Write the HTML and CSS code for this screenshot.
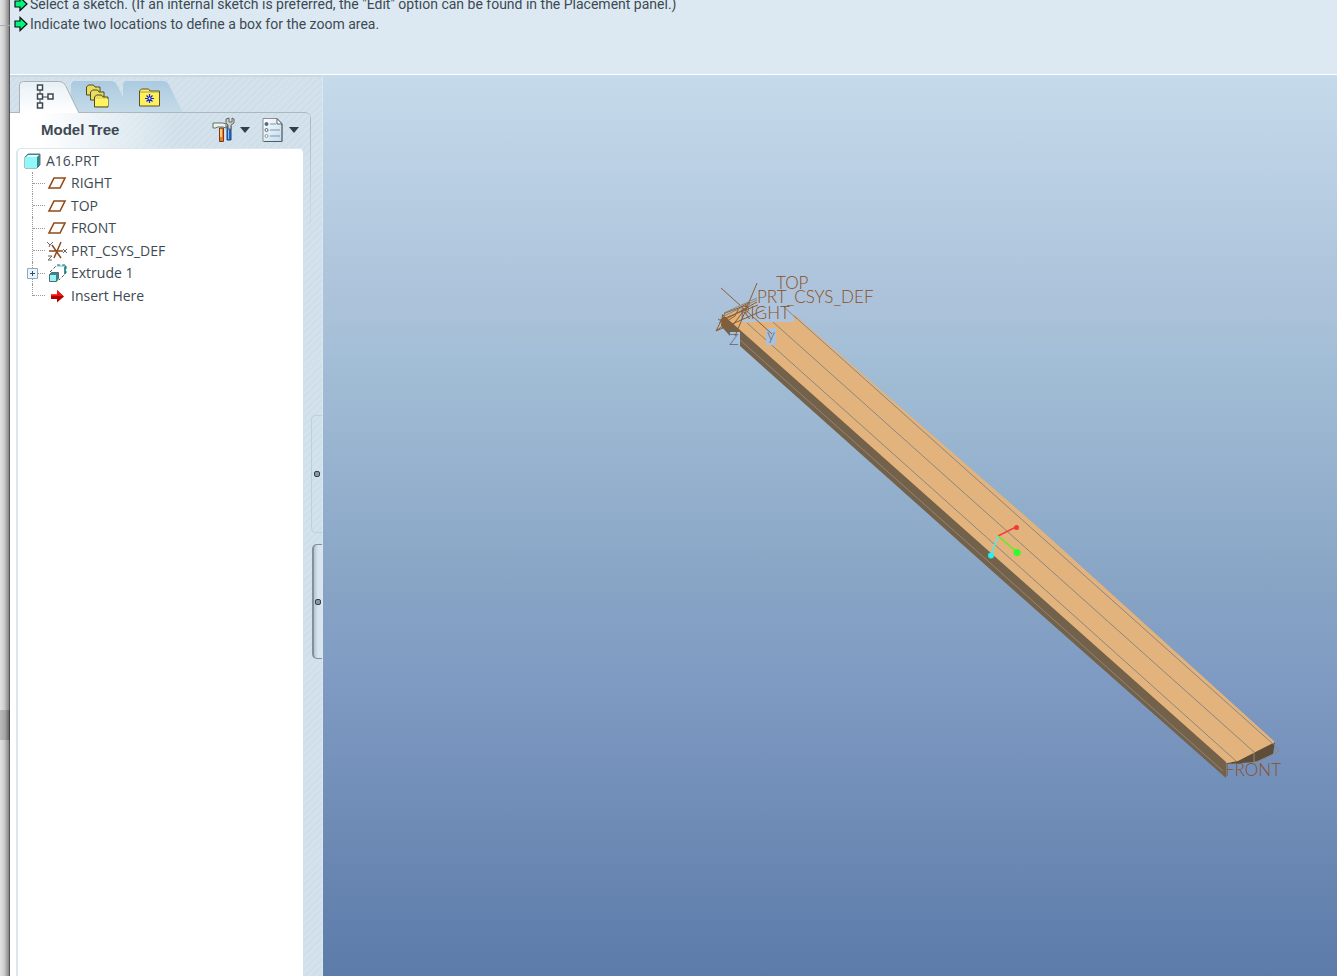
FILE: index.html
```html
<!DOCTYPE html>
<html lang="en">
<head>
<meta charset="utf-8">
<title>A16.PRT</title>
<link rel="stylesheet" href="styles.css">
</head>
<body>
<div class="app">
  <div class="edge"><div class="edge-top"></div><div class="edge-thumb"></div></div>
  <div class="window">
    <section class="messages" aria-label="Messages">
      <p class="message"><svg class="arrow" viewBox="0 0 14 16"><path d="M1 5h5V1.500l7 6.500-7 6.500V11H1z"/></svg>Select a sketch. (If an internal sketch is preferred, the "Edit" option can be found in the Placement panel.)</p>
      <p class="message"><svg class="arrow" viewBox="0 0 14 16"><path d="M1 5h5V1.500l7 6.500-7 6.500V11H1z"/></svg>Indicate two locations to define a box for the zoom area.</p>
    </section>
    <main class="work">
      <aside class="navigator">
        <div class="tabs" role="tablist">
          <button class="tab" role="tab" aria-selected="true" aria-label="Model Tree">
            <svg viewBox="0 0 62 32">
              <defs><linearGradient id="tabOn" x2="0" y2="1"><stop offset="0" stop-color="#e8f0f5"/><stop offset="1" stop-color="#fff"/></linearGradient></defs>
              <path d="M.5 32V4q0-3.500 4-3.500h36q4 0 6 4L60 32" fill="url(#tabOn)" stroke="#a9b1b6"/>
              <g fill="#fff" stroke="#3b4850" stroke-width="1.500"><path d="M21 9v4m0 6v3m3-6h5" fill="none" stroke-width="1"/><path d="M18.500 4h5v5h-5zM18.500 13h5v5h-5zM18.500 22h5v5h-5zM29 13h5v5h-5z"/></g>
            </svg>
          </button>
          <button class="tab" role="tab" aria-selected="false" aria-label="Folder Browser">
            <svg viewBox="0 0 62 32">
              <defs><linearGradient id="tabOff" x2="0" y2="1"><stop offset="0" stop-color="#abcae0"/><stop offset="1" stop-color="#c6dbe8"/></linearGradient></defs>
              <path d="M0 32V5q0-5 4-5h36q4 0 6 4l14 28z" fill="url(#tabOff)"/>
              <g stroke="#514a20" fill="#e8dc62"><path d="M15.500 14V6l2-2h5l1.500 2h5v8z"/><path d="M19.500 19v-8l2-2h5l1.500 2h5v8z"/><path d="M23.500 26V16l2-2h5l1.500 2h5v10z"/></g>
              <path d="M24 18h13v7H24z" fill="#fff45b"/>
            </svg>
          </button>
          <button class="tab" role="tab" aria-selected="false" aria-label="Favorites">
            <svg viewBox="0 0 62 32">
              <path d="M0 32V5q0-5 4-5h36q4 0 6 4l14 28z" fill="url(#tabOff)"/>
              <path d="M16.500 25V10l2-2h7l1.500 2h9.500v15z" fill="#fff15b" stroke="#5b552c"/><path d="M17 11h19" stroke="#a99d42"/>
              <path d="M26.500 13v9m-4.500-4.500h9m-7.500-3 6 6m0-6-6 6" stroke="#1728d0" stroke-width="1.200"/><circle cx="26.500" cy="17.500" r="1" fill="#fff"/>
            </svg>
          </button>
        </div>
        <div class="nav-body">
          <div class="panel">
            <header class="panel-head">
              <h1 class="panel-title">Model Tree</h1>
              <div class="tools">
                <button class="tool" aria-label="Settings">
                  <svg class="tool-icon" viewBox="0 0 24 26">
                    <path d="M16 9h4v14h-4V10z" fill="#2467ce" stroke="#24457b"/><path d="M17.500 11v11" stroke="#80bbf4"/>
                    <path d="M15 2v4l2 2v4h3V8l3-2V2l-2-1v4h-3V1z" fill="#ccd0ca" stroke="#62665f"/>
                    <path d="M8.500 11h4v13.500h-4z" fill="#ed7b22" stroke="#7a3a18"/><path d="M10 12v8" stroke="#ffe49c" stroke-width="1.500"/>
                    <path d="M2 6h10l3 1v4l-3-1H6l-1 1H2z" fill="#eef2ee" stroke="#637068"/>
                  </svg><span class="caret"></span>
                </button>
                <button class="tool" aria-label="Show">
                  <svg class="tool-icon" viewBox="0 0 24 26">
                    <defs><linearGradient id="sheet" x2="1" y2="1"><stop stop-color="#fff"/><stop offset="1" stop-color="#bddcf4"/></linearGradient></defs>
                    <path d="M3 1.500h14l5 5V24.500H3z" fill="url(#sheet)" stroke="#8a8f92"/><path d="M22 7v17.500H4" fill="none" stroke="#555c60"/><path d="M17 1.500V7h5z" fill="#fff" stroke="#626668"/>
                    <path d="M10 7h6m-6 6h10m-10 6h10" stroke="#8c9295"/><g stroke="#526576" fill="#fff"><circle cx="6.500" cy="7" r="1.500" fill="#51667b"/><circle cx="6.500" cy="13" r="1.500"/><circle cx="6.500" cy="19" r="1.500" stroke="#9b9489"/></g>
                  </svg><span class="caret"></span>
                </button>
              </div>
            </header>
            <div class="tree-box">
              <ul class="tree">
                <li class="root"><svg class="root-icon" viewBox="0 0 18 16"><path d="M1 4l3-3h12v11l-3 3H1z" fill="#37868c" stroke="#64777b"/><path d="M1 4h12v11H1z" fill="#91f8fa"/><path d="M2 4l2-2h11l-2 2z" fill="#e0ffff"/></svg>A16.PRT</li>
                <li class="node"><svg class="icon" viewBox="0 0 22 22"><path class="plane" d="M8 6h11l-5 10H3z"/></svg>RIGHT</li>
                <li class="node"><svg class="icon" viewBox="0 0 22 22"><path class="plane" d="M8 6h11l-5 10H3z"/></svg>TOP</li>
                <li class="node"><svg class="icon" viewBox="0 0 22 22"><path class="plane" d="M8 6h11l-5 10H3z"/></svg>FRONT</li>
                <li class="node"><svg class="icon" viewBox="0 0 22 22"><g fill="none" stroke="#8c4b1c" stroke-width="1.500"><path d="M3 11h14M6 5l9 13M15 2 8 18"/></g><g fill="none" stroke="#666"><path d="M1 2l3 3 3-3M4 5 3 7M17 9l4 4m0-4-4 4M2 16h4l-4 4h4"/></g></svg>PRT_CSYS_DEF</li>
                <li class="node"><button class="expand" aria-label="Expand Extrude 1"><svg viewBox="0 0 11 11"><path d="M.5.5h10v10H.5z" fill="#eaf4fc" stroke="#8eaabd"/><path d="M3 5.500h5M5.500 3v5" stroke="#2c526e"/></svg></button><svg class="icon" viewBox="0 0 22 22"><path d="M12 3h8l-2 2h-8z" fill="#8df0f2"/><path d="M18 5l2-2v8l-2 2z" fill="#2c9b9e"/><path d="M4 10l7-7h9v8l-7 7" fill="none" stroke="#4a5052" stroke-dasharray="3 2"/><path d="M3.500 12.500l2-2h7v6l-2 3h-7z" fill="#37868c" stroke="#596b6c"/><path d="M4 13h6v6H4z" fill="#91f4f6"/></svg>Extrude 1</li>
                <li class="node last"><svg class="icon" viewBox="0 0 22 22"><path d="M5 9.500h6V5l7 6.500-7 6V14H5z" fill="#b40000"/><path d="M5 9.500h6V5l6 6H5z" fill="#f51414"/></svg>Insert Here</li>
              </ul>
            </div>
          </div>
          <div class="splitter"><button class="grip grip-flat" aria-label="Collapse navigator"></button><button class="grip grip-raised" aria-label="Resize navigator"></button></div>
        </div>
      </aside>
      <section class="viewport" aria-label="Model view">
        <svg class="scene" viewBox="323 75 1014 901">
          <path d="M1228 764 1275 742 1273 754 1255 762z" fill="#5e4d38"/>
          <path d="M722 316 773 296 1040 529 1275 742 1238 761 1226 763 1010 570z" fill="#e3b37d"/>
          <path d="M722 314 1010 570 1226 762V778L991 570 740 346V338L730 336 721 326z" fill="#73614a"/>
          <path d="M1273 743 1279 751 1258 762H1254V753" fill="none" stroke="#8a8782"/>
          <g fill="none" stroke="#8b867e">
            <path d="M747 323 1022 569 1236 761M773 322 1254 752M783 306 1273 744M740 340 998 570 1223 771"/>
          </g>
          <path d="M740 304h54v18H740z" fill="#adc4dc"/>
          <g fill="#a9c1db"><path d="M730 332h10v13h-10zM766 328h10v17h-10z"/></g>
          <path d="M783 306 797 319" stroke="#8b867e"/>
          <g class="datum">
            <text x="740" y="319">RIGHT</text>
            <path d="M757 291h37v14H757z" fill="#adc4dc"/>
            <text x="776" y="289">TOP</text>
            <text x="757" y="303">PRT_CSYS_DEF</text>
            <text x="1225" y="776">FRONT</text>
            <text class="axis" x="729" y="345">Z</text>
            <text class="axis" x="767" y="340">y</text>
          </g>
          <g fill="none" stroke="#8f5c2c">
            <path d="M721 288 772 334M757 283 735 336M716 331 764 310M719 323 757 302M720 320 758 305M716 331 725 313 750 304M721 325 735 316 739 308 750 302 733 325zM718 319l8 5-9 6"/>
          </g>
          <path d="M724 313 757 298M722 317 757 300" fill="none" stroke="#8e8778"/>
          <g stroke-width="1.500"><path d="M998 536 1016 527" stroke="#f04040"/><path d="M998 536 1017 552" stroke="#5fed22"/><path d="M998 536 991 555" stroke="#58e9e4"/></g>
          <circle cx="1016.500" cy="527.500" r="2.500" fill="#f03c36"/><circle cx="1017" cy="552.500" r="3.500" fill="#2cff27"/><circle cx="991" cy="555.500" r="3" fill="#24eff2"/>
        </svg>
      </section>
    </main>
  </div>
</div>
</body>
</html>
```
FILE: styles.css
```css
* { box-sizing: border-box; }
body { margin: 0; font-family: "Open Sans", "Noto Sans", sans-serif; color: #3e4a53; }
button { border: 0; padding: 0; background: none; font: inherit; }
svg { display: block; flex: none; }
.app { display: flex; height: 100vh; overflow: hidden; }
.edge { width: 10px; flex: none; display: grid; grid-template-rows: 26px 684px 30px; background: linear-gradient(90deg, #e2e2e2, #cfcfcf 40%, #858585 90%, #555 90%); }
.edge-top { border-bottom: 1px solid #aaa; }
.edge-thumb { grid-row: 3; background: linear-gradient(90deg, #bbb, #a5a5a5 50%, #666 90%, #444 90%); }
.window { flex: 1; min-width: 0; display: flex; flex-direction: column; }
.messages { flex: none; height: 75px; overflow: hidden; background: #dce9f2; border-bottom: 1px solid #fff; font-family: Roboto, "Liberation Sans", sans-serif; font-size: 14px; line-height: 20px; }
.message { margin: 0; padding-left: 4px; display: flex; align-items: center; gap: 2px; white-space: nowrap; }
.message:first-child { margin-top: -6px; }
.arrow { width: 14px; height: 16px; fill: #00f57c; stroke: #111; stroke-width: 1.2; }
.work { flex: 1; min-height: 0; display: flex; }
.navigator { width: 313px; flex: none; display: flex; flex-direction: column; border-top: 2px solid #c6d8e3; border-right: 1px solid #dbe7ef; background: repeating-linear-gradient(135deg, #d3e2ec 0 3px, #cedfe9 3px 5px); }
.tabs { height: 35px; padding: 4px 0 0 9px; display: flex; }
.tab { width: 52px; height: 31px; position: relative; }
.tab:first-child { z-index: 1; }
.tab svg { width: 62px; height: 32px; }
.nav-body { flex: 1; min-height: 0; display: flex; }
.panel { width: 301px; position: relative; display: flex; flex-direction: column; border-top: 1px solid #adb8bd; border-top-right-radius: 6px; background: linear-gradient(90deg, #fff 0 7px, #fff 10%, transparent 55%); }
.panel::after { content: ""; position: absolute; top: 4px; right: 0; width: 1px; height: 120px; background: linear-gradient(#adb8bd, transparent); }
.panel-head { height: 35px; padding: 0 12px 2px 31px; display: flex; justify-content: space-between; align-items: center; }
.panel-title { margin: 0; font: bold 15px/20px "Liberation Sans", Arial, sans-serif; }
.tools { display: flex; gap: 10px; }
.tool { display: flex; align-items: center; gap: 5px; }
.tool-icon { width: 24px; height: 26px; }
.caret { border: 5px solid transparent; border-top: 6px solid #333f48; border-bottom: 0; }
.tree-box { flex: 1; margin-right: 8px; padding-left: 6px; background: #fff; border-top-right-radius: 5px; }
.tree { height: 100%; margin: 0; padding: 0; list-style: none; display: grid; grid-template-rows: 23px 22px 23px 22px 23px 22px 23px; font-size: 14px; line-height: 22px; border: 1px solid #dbe6ed; border-width: 1px 0 0 2px; border-top-left-radius: 5px; }
.root { display: flex; align-items: center; gap: 4px; padding-left: 6px; }
.root-icon { width: 18px; height: 16px; }
.node { position: relative; display: flex; align-items: center; gap: 3px; padding-left: 28px; }
.icon { width: 22px; height: 22px; }
.plane { fill: #fffdfa; stroke: #8f4b1b; stroke-width: 1.6; }
.node::before { content: ""; position: absolute; left: 14px; top: 0; bottom: 0; border-left: 1px dotted #939a9e; }
.node::after { content: ""; position: absolute; left: 15px; top: 11px; width: 12px; border-top: 1px dotted #939a9e; }
.last::before { bottom: 11px; }
.expand { position: absolute; left: 9px; top: 6px; z-index: 1; }
.expand svg { width: 11px; height: 11px; }
.splitter { flex: 1; padding-top: 303px; display: flex; flex-direction: column; gap: 11px; }
.grip { height: 118px; display: grid; place-items: center; border: 1px solid #b7d2e3; border-right: 0; border-radius: 5px 0 0 5px; }
.grip::after { content: ""; width: 4px; height: 4px; border: 1px solid #33424d; border-radius: 2px; background: #8a989f; }
.grip-raised { height: 115px; margin-left: 1px; border: 1px solid #829098; border-left-width: 2px; border-right: 0; background: linear-gradient(90deg, #b5c7d2, #d6e5ee 50%); }
.viewport { flex: 1; min-width: 0; background: linear-gradient(#c5daea, #adc3db 24%, #a2bed6 32%, #87a4c5 57%, #7f9bc3 67%, #5d7ba9); }
.scene { width: 100%; height: 100%; }
.datum { font-family: Lato, sans-serif; font-size: 17px; font-weight: 300; fill: #8a4f1c; }
.datum .axis { font-size: 16px; fill: #566a7c; }
```
